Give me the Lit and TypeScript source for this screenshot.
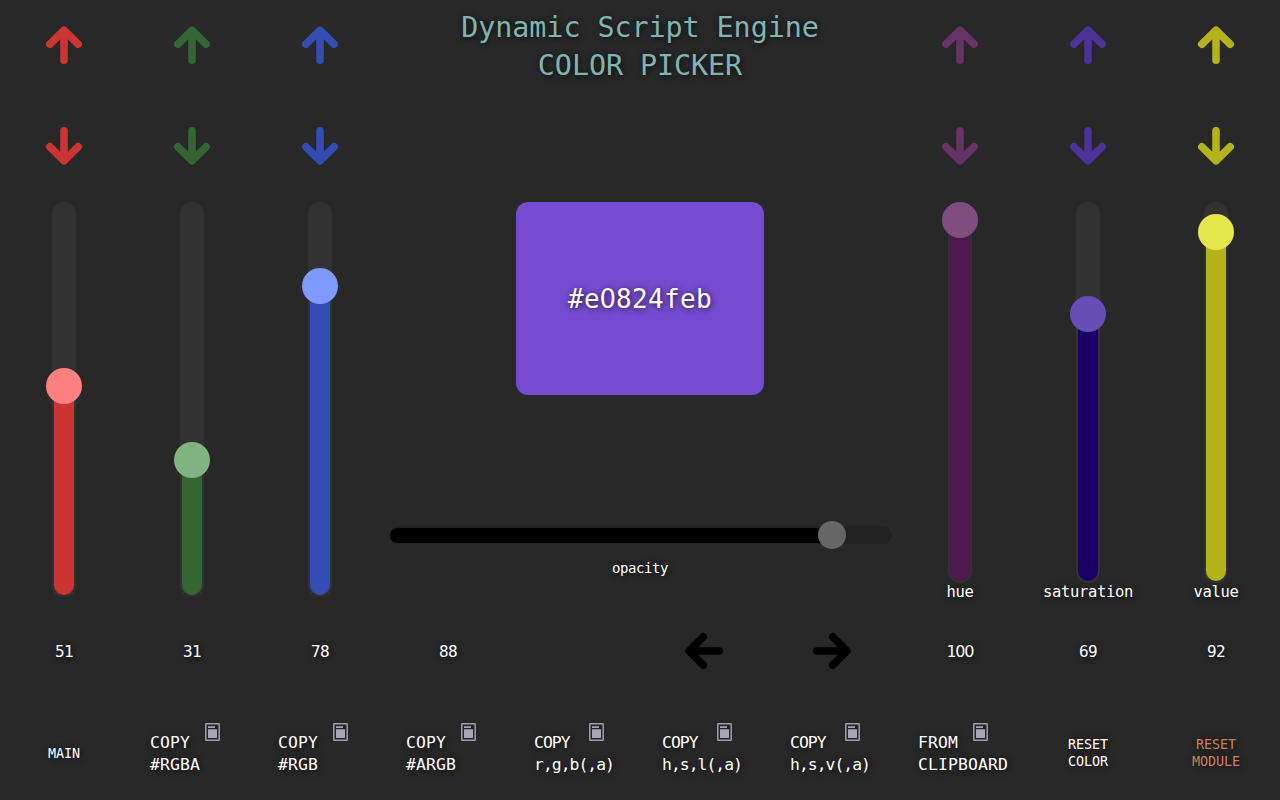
import { LitElement, html, css, svg } from "lit";
import { customElement, property } from "lit/decorators.js";
import { classMap } from "lit/directives/class-map.js";
import { styleMap } from "lit/directives/style-map.js";

// The monospace face draws a marked zero, so zeros use the plain sans glyph.
const plainZeros = (text: string) =>
  [...text].map((c) => (c === "0" ? html`<span class="zero">0</span>` : c));

const zeroStyles = css`
  .zero {
    font-family: "DejaVu Sans", sans-serif;
    margin: 0 -0.017em;
  }
`;

@customElement("arrow-icon")
class ArrowIcon extends LitElement {
  @property() direction = "up";
  @property() color = "#000";

  static styles = css`
    :host { display: block; width: 38px; height: 38px; }
    svg { display: block; overflow: visible; }
    .down { transform: rotate(180deg); }
    .left { transform: rotate(-90deg); }
    .right { transform: rotate(90deg); }
  `;

  render() {
    return html`<svg class=${this.direction} width="38" height="38" viewBox="0 0 38 38"
      fill="none" stroke=${this.color} stroke-width="7.6" stroke-linecap="round" stroke-linejoin="round">
      ${svg`<path d="M4.8 18.2 19 4.2 33.2 18.2M19 5V34.2"/>`}
    </svg>`;
  }
}

@customElement("vertical-slider")
class VerticalSlider extends LitElement {
  @property({ type: Number }) length = 395;
  @property({ type: Number }) knob = 0;
  @property() fill = "";
  @property() thumb = "";

  static styles = css`
    :host { display: block; }
    .track {
      position: relative;
      box-sizing: border-box;
      width: 24px;
      border-radius: 12px;
      background: #323232;
    }
    .fill {
      position: absolute;
      left: 2px;
      right: 2px;
      bottom: 2px;
      border-radius: 0 0 10px 10px;
    }
    .thumb {
      position: absolute;
      left: -6px;
      width: 36px;
      height: 36px;
      border-radius: 50%;
    }
  `;

  render() {
    return html`<div class="track" style=${styleMap({ height: `${this.length}px` })}>
      <div class="fill" style=${styleMap({ top: `${this.knob}px`, background: this.fill })}></div>
      <div class="thumb" style=${styleMap({ top: `${this.knob - 18}px`, background: this.thumb })}></div>
    </div>`;
  }
}

interface Channel {
  arrow: string;
  fill: string;
  thumb: string;
  knob: number;
  length: number;
  label?: string;
}

const rgb: Channel[] = [
  { arrow: "#cc3333", fill: "#cc3333", thumb: "#ff8080", knob: 183.6, length: 395 },
  { arrow: "#336633", fill: "#336633", thumb: "#80b380", knob: 258, length: 395 },
  { arrow: "#334db3", fill: "#334db3", thumb: "#8099ff", knob: 83.5, length: 395 },
];

const hsv: Channel[] = [
  { arrow: "#663366", fill: "#4d194d", thumb: "#804d80", knob: 18, length: 381, label: "hue" },
  { arrow: "#4d3399", fill: "#1a0066", thumb: "#664db3", knob: 112.4, length: 381, label: "saturation" },
  { arrow: "#b3b31a", fill: "#b3b31a", thumb: "#e6e64d", knob: 30.4, length: 381, label: "value" },
];

const copies = [
  { top: "COPY", bottom: "#RGBA", tight: false },
  { top: "COPY", bottom: "#RGB", tight: false },
  { top: "COPY", bottom: "#ARGB", tight: false },
  { top: "COPY", bottom: "r,g,b(,a)", tight: true },
  { top: "COPY", bottom: "h,s,l(,a)", tight: true },
  { top: "COPY", bottom: "h,s,v(,a)", tight: true },
  { top: "FROM", bottom: "CLIPBOARD", tight: false },
];

@customElement("app-root")
class AppRoot extends LitElement {
  static styles = [
    zeroStyles,
    css`
      :host {
        display: block;
        width: 1280px;
        height: 800px;
        overflow: hidden;
        background: #282828;
        color: #fff;
        font-family: "DejaVu Sans Mono", "Liberation Mono", monospace;
        text-shadow: 1px 1px 6px rgba(0, 0, 0, 0.75);
        white-space: nowrap;
      }
      .page { display: grid; grid-template-rows: 601px 100px 99px; height: 800px; }
      .upper { display: grid; grid-template-columns: 384px 512px 384px; }
      .channels { display: grid; grid-template-columns: repeat(3, 128px); }
      .channel {
        display: grid;
        grid-template-rows: 90px 112px 399px;
        justify-items: center;
      }
      .channel arrow-icon { align-self: center; }
      .track-cell { display: flex; flex-direction: column; align-items: center; }
      .label { font-size: 15.5px; letter-spacing: -0.33px; line-height: 18px; }
      .middle { display: flex; flex-direction: column; align-items: center; }
      h1 {
        margin: 0;
        padding-top: 9px;
        height: 194px;
        box-sizing: border-box;
        font-size: 28.4px;
        font-weight: 400;
        line-height: 38px;
        letter-spacing: -0.07px;
        text-align: center;
        color: #80b3b3;
      }
      .swatch {
        display: flex;
        align-items: center;
        justify-content: center;
        width: 248px;
        height: 193px;
        margin-top: 8px;
        border-radius: 12px;
        background: #764bd1;
        font-size: 26px;
        letter-spacing: 0.35px;
      }
      .opacity {
        position: relative;
        width: 502px;
        height: 18px;
        margin: 131px 0 0 2px;
        border-radius: 9px;
        background: #222;
      }
      .opacity-fill {
        position: absolute;
        left: 0;
        top: 2px;
        height: 14.5px;
        border-radius: 7px 0 0 7px;
        background: #000;
      }
      .opacity-thumb {
        position: absolute;
        top: -5px;
        width: 28px;
        height: 28px;
        border-radius: 50%;
        background: #666;
      }
      .opacity-label { margin-top: 15px; font-size: 14px; letter-spacing: -0.43px; line-height: 18px; }
      .row { display: grid; grid-template-columns: repeat(10, 128px); }
      .cell { display: flex; align-items: center; justify-content: center; }
      .number { font-size: 16px; letter-spacing: -0.63px; }
      .small {
        padding-top: 5px;
        font-size: 13.4px;
        letter-spacing: -0.07px;
        line-height: 17px;
        text-align: center;
      }
      .warn { color: #cc8052; }
      .copy { display: grid; grid-template-columns: 55px 15px; padding: 22px 0 0 22px; align-items: start; }
      .copy svg { display: block; }
      .copy-text { padding-top: 9px; font-size: 16.4px; letter-spacing: 0.12px; line-height: 22px; }
      .tight { letter-spacing: -0.98px; }
    `,
  ];

  private channel(c: Channel) {
    return html`<div class="channel">
      <arrow-icon direction="up" color=${c.arrow}></arrow-icon>
      <arrow-icon direction="down" color=${c.arrow}></arrow-icon>
      <div class="track-cell">
        <vertical-slider .length=${c.length} .knob=${c.knob} .fill=${c.fill} .thumb=${c.thumb}></vertical-slider>
        ${c.label ? html`<div class="label">${c.label}</div>` : ""}
      </div>
    </div>`;
  }

  private number(value: string) {
    return html`<div class="cell number"><span>${plainZeros(value)}</span></div>`;
  }

  render() {
    return html`<div class="page">
      <div class="upper">
        <div class="channels">${rgb.map((c) => this.channel(c))}</div>
        <div class="middle">
          <h1>Dynamic Script Engine<br />COLOR PICKER</h1>
          <div class="swatch"><span>${plainZeros("#e0824feb")}</span></div>
          <div class="opacity">
            <div class="opacity-fill" style=${styleMap({ width: "442px" })}></div>
            <div class="opacity-thumb" style=${styleMap({ left: "427.6px" })}></div>
          </div>
          <div class="opacity-label">opacity</div>
        </div>
        <div class="channels">${hsv.map((c) => this.channel(c))}</div>
      </div>
      <div class="row">
        ${["51", "31", "78", "88"].map((n) => this.number(n))}
        <div class="cell"></div>
        <div class="cell"><arrow-icon direction="left"></arrow-icon></div>
        <div class="cell"><arrow-icon direction="right"></arrow-icon></div>
        ${["100", "69", "92"].map((n) => this.number(n))}
      </div>
      <div class="row">
        <div class="cell small">MAIN</div>
        ${copies.map(
          (b) => html`<div class="copy">
            <div class=${classMap({ "copy-text": true, tight: b.tight })}>${b.top}<br />${b.bottom}</div>
            <svg width="15" height="18" viewBox="0 0 15 18">
              <rect x="0.75" y="0.75" width="13.5" height="16.5" rx="0.6" fill="#25242c" stroke="#a09cac" stroke-width="1.5" />
              <path d="M3 3.3H10V4.9H3ZM3 6.2H12V15H3Z" fill="#a8a3b5" />
            </svg>
          </div>`
        )}
        <div class="cell small">RESET<br />COLOR</div>
        <div class="cell small warn">RESET<br />MODULE</div>
      </div>
    </div>`;
  }
}
